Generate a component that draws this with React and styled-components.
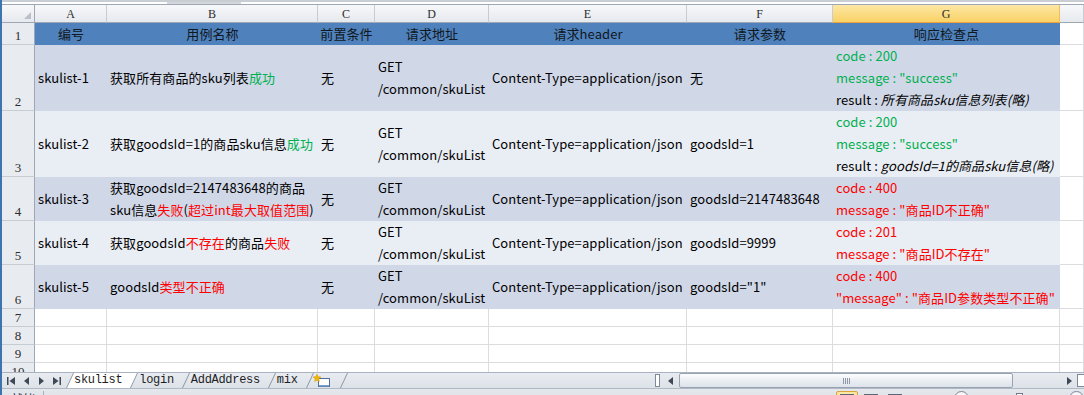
import React from 'react';
import styled, { createGlobalStyle } from 'styled-components';

const GlobalStyle = createGlobalStyle`
  * { box-sizing: border-box; }
  html, body { margin: 0; padding: 0; background: #ffffff; }
  body { font-family: "Noto Sans CJK SC", "Noto Sans", sans-serif; }
`;

const COLS = [72, 211, 57, 114, 198, 146, 227];
const LETTERS = ['A', 'B', 'C', 'D', 'E', 'F', 'G'];
const ROW_HEIGHTS = [22, 66, 66, 44, 44, 44, 18, 18, 18, 18];
const FILLS = {
    head: '#4f81bd',
    dark: '#d0d8e8',
    light: '#e9edf4',
    none: '#ffffff',
};

const Window = styled.div`
    width: 1084px;
    height: 395px;
    overflow: hidden;
    display: flex;
    flex-direction: column;
    border-left: 2px solid #3d74ad;
    background: #ffffff;
`;
const FormulaEdge = styled.div`
    height: 5px;
    flex-shrink: 0;
    display: flex;
    border-top: 2px solid #c9ced5;
    border-bottom: 1px solid #9ea7b3;
    padding-left: 165px;
`;
const ResizeGrip = styled.div`
    width: 74px;
    height: 2px;
    background: #d3d7dc;
`;
const Sheet = styled.div`
    height: 367px;
    flex-shrink: 0;
    overflow: hidden;
    display: grid;
    grid-template-columns: 33px ${COLS.map(c => `${c}px`).join(' ')} 1fr;
    grid-template-rows: 18px ${ROW_HEIGHTS.map(h => `${h}px`).join(' ')};
`;
const Corner = styled.div`
    display: flex;
    align-items: flex-end;
    justify-content: flex-end;
    padding: 0 3px 3px 0;
    background: linear-gradient(#f7f8fa, #e6e9ee);
    border-right: 1px solid #9ea7b3;
    border-bottom: 1px solid #9ea7b3;
`;
const ColHead = styled.div`
    display: flex;
    align-items: center;
    justify-content: center;
    font: 12px/16px "Liberation Serif", serif;
    color: #2d2d2d;
    background: ${({ $selected }) =>
        $selected ? 'linear-gradient(#fde7a4, #f9d266)' : 'linear-gradient(#f7f8fa, #e6e9ee)'};
    border-right: 1px solid ${({ $selected }) => ($selected ? '#efbf5a' : '#c7ccd3')};
    border-bottom: 1px solid ${({ $selected }) => ($selected ? '#f0a23c' : '#9ea7b3')};
`;
const RowHead = styled.div`
    display: flex;
    align-items: flex-end;
    justify-content: center;
    padding-bottom: 1px;
    font: 13px/15px "Liberation Serif", serif;
    color: #2d2d2d;
    background: #e8ebef;
    border-right: 1px solid #9ea7b3;
    border-bottom: 1px solid #c7ccd3;
`;
const Cell = styled.div`
    display: flex;
    flex-direction: column;
    justify-content: center;
    align-items: ${({ $center }) => ($center ? 'center' : 'flex-start')};
    padding: 0 3px;
    font-size: 13px;
    line-height: 22px;
    letter-spacing: 0.08px;
    white-space: nowrap;
    color: ${({ $fill }) => ($fill === 'head' ? '#101820' : '#000000')};
    background: ${({ $fill }) => FILLS[$fill]};
    border-right: ${({ $grid }) => ($grid ? '1px solid #dadcdd' : 'none')};
    border-bottom: ${({ $grid }) => ($grid ? '1px solid #dadcdd' : 'none')};
`;
const Ok = styled.span`
    color: #00b050;
`;
const Fail = styled.span`
    color: #ff0000;
`;
const Note = styled.i`
    font-style: italic;
`;

const TabBar = styled.div`
    height: 16px;
    flex-shrink: 0;
    display: flex;
    align-items: stretch;
    background: linear-gradient(#e8ecf1, #dde2e8);
    border-top: 1px solid #a9b2be;
`;
const Nav = styled.div`
    width: 64px;
    flex-shrink: 0;
    display: flex;
    align-items: center;
    padding-left: 5px;
    gap: 6px;
`;
const NavIcon = styled.svg`
    width: 9px;
    height: 8px;
    fill: #3e4857;
    flex-shrink: 0;
`;
const Tabs = styled.div`
    display: flex;
    align-items: stretch;
`;
const Tab = styled.div`
    position: relative;
    z-index: ${({ $active }) => ($active ? 2 : 1)};
    padding: 0 9px 0 8px;
    font: 12px/15px "Liberation Mono", monospace;
    letter-spacing: -0.3px;
    color: #1e1e1e;
    &::before {
        content: '';
        position: absolute;
        z-index: -1;
        inset: 0;
        background: ${({ $active }) => ($active ? '#ffffff' : 'transparent')};
        border-right: 1px solid #8c96a4;
        border-left: ${({ $active }) => ($active ? '1px solid #8c96a4' : 'none')};
        transform: skewX(-25deg);
        transform-origin: bottom left;
    }
`;
const NewSheet = styled(Tab)`
    display: flex;
    align-items: center;
    padding: 0 10px 0 6px;
`;
const Spacer = styled.div`
    flex: 1;
`;
const HScroll = styled.div`
    width: 429px;
    flex-shrink: 0;
    display: flex;
    align-items: center;
`;
const SplitBox = styled.div`
    width: 5px;
    height: 13px;
    margin-right: 3px;
    border: 1px solid #7f8a99;
    background: #ffffff;
`;
const ArrowButton = styled.div`
    width: ${({ $w }) => $w}px;
    height: 15px;
    display: flex;
    align-items: center;
    justify-content: center;
    flex-shrink: 0;
`;
const Thumb = styled.div`
    width: 334px;
    height: 15px;
    flex-shrink: 0;
    display: flex;
    align-items: center;
    justify-content: center;
    border: 1px solid #97a3b3;
    border-radius: 2px;
    background: linear-gradient(#fdfdfe, #e9edf2 55%, #dde3ea);
`;
const Grip = styled.div`
    width: 7px;
    height: 6px;
    background: repeating-linear-gradient(90deg, #8e98a6 0 1px, transparent 1px 2px);
`;
const Track = styled.div`
    flex: 1;
`;
const EndBox = styled.div`
    width: 7px;
    height: 13px;
    margin-left: 1px;
    border: 1px solid #7f8a99;
    border-right: none;
    background: #ffffff;
`;

const StatusBar = styled.div`
    height: 22px;
    flex-shrink: 0;
    display: flex;
    align-items: flex-start;
    padding-top: 2px;
    background: linear-gradient(#e4e8ed, #d8dde4);
    border-top: 1px solid #b1b9c4;
    font-size: 12px;
    line-height: 16px;
    color: #1e2a3a;
`;
const Ready = styled.div`
    width: 42px;
    padding-left: 9px;
    border-right: 1px solid #a6afbb;
    height: 18px;
`;
const ViewButton = styled.div`
    width: 22px;
    height: 18px;
    margin-right: 2px;
    border-radius: 2px;
    display: flex;
    justify-content: center;
    padding-top: 2px;
    background: ${({ $on }) => ($on ? 'linear-gradient(#fde9a8, #f8cf62)' : 'transparent')};
    border: 1px solid ${({ $on }) => ($on ? '#d9a43c' : 'transparent')};
`;
const ViewGlyph = styled.div`
    width: 14px;
    height: 11px;
    border: 1px solid #5b6779;
    background: #ffffff;
`;
const Zoom = styled.div`
    width: 40px;
    margin-left: 6px;
    text-align: center;
`;
const ZoomKnob = styled.div`
    width: 15px;
    height: 15px;
    border-radius: 50%;
    border: 1px solid #7c8798;
    background: #f4f6f8;
`;
const Slider = styled.div`
    width: 100px;
    display: flex;
    justify-content: center;
    padding-top: 2px;
`;
const SliderThumb = styled.div`
    width: 7px;
    height: 12px;
    border: 1px solid #6d7888;
    background: #ffffff;
`;

const rows = [
    {
        fill: 'dark',
        id: 'skulist-1',
        name: [<>获取所有商品的sku列表<Ok>成功</Ok></>],
        params: '无',
        check: [
            <Ok>code : 200</Ok>,
            <Ok>message : "success"</Ok>,
            <>result : <Note>所有商品sku信息列表(略)</Note></>,
        ],
    },
    {
        fill: 'light',
        id: 'skulist-2',
        name: [<>获取goodsId=1的商品sku信息<Ok>成功</Ok></>],
        params: 'goodsId=1',
        check: [
            <Ok>code : 200</Ok>,
            <Ok>message : "success"</Ok>,
            <>result : <Note>goodsId=1的商品sku信息(略)</Note></>,
        ],
    },
    {
        fill: 'dark',
        id: 'skulist-3',
        name: [
            <>获取goodsId=2147483648的商品</>,
            <>sku信息<Fail>失败</Fail>(<Fail>超过int最大取值范围</Fail>)</>,
        ],
        params: 'goodsId=2147483648',
        check: [<Fail>code : 400</Fail>, <Fail>message : "商品ID不正确"</Fail>],
    },
    {
        fill: 'light',
        id: 'skulist-4',
        name: [<>获取goodsId<Fail>不存在</Fail>的商品<Fail>失败</Fail></>],
        params: 'goodsId=9999',
        check: [<Fail>code : 201</Fail>, <Fail>message : "商品ID不存在"</Fail>],
    },
    {
        fill: 'dark',
        id: 'skulist-5',
        name: [<>goodsId<Fail>类型不正确</Fail></>],
        params: 'goodsId="1"',
        check: [<Fail>code : 400</Fail>, <Fail>"message" : "商品ID参数类型不正确"</Fail>],
    },
];

const HEADERS = ['编号', '用例名称', '前置条件', '请求地址', '请求header', '请求参数', '响应检查点'];

const Lines = ({ items }) => items.map((item, i) => <div key={i}>{item}</div>);

const DataRow = ({ row, index }) => {
    const { fill, id, name, params, check } = row;
    const values = [
        [id],
        name,
        ['无'],
        ['GET', '/common/skuList'],
        ['Content-Type=application/json'],
        [params],
        check,
    ];
    return (
        <>
            <RowHead>{index + 2}</RowHead>
            {values.map((v, i) => (
                <Cell key={i} $fill={fill}>
                    <Lines items={v} />
                </Cell>
            ))}
            <Cell $fill="none" $grid />
        </>
    );
};

const EmptyRow = ({ n }) => (
    <>
        <RowHead>{n}</RowHead>
        {LETTERS.map(l => (
            <Cell key={l} $fill="none" $grid />
        ))}
        <Cell $fill="none" $grid />
    </>
);

const Triangle = ({ dir }) => (
    <svg width="6" height="8" viewBox="0 0 6 8">
        <path d={dir === 'left' ? 'M5 0 L0 4 L5 8 Z' : 'M1 0 L6 4 L1 8 Z'} fill="#3e4857" />
    </svg>
);

export default function App() {
    return (
        <>
            <GlobalStyle />
            <Window>
                <FormulaEdge>
                    <ResizeGrip />
                </FormulaEdge>
                <Sheet>
                    <Corner>
                        <svg width="7" height="7" viewBox="0 0 7 7">
                            <path d="M7 0 L7 7 L0 7 Z" fill="#b9c0ca" />
                        </svg>
                    </Corner>
                    {LETTERS.map(l => (
                        <ColHead key={l} $selected={l === 'G'}>
                            {l}
                        </ColHead>
                    ))}
                    <ColHead />

                    <RowHead>1</RowHead>
                    {HEADERS.map(h => (
                        <Cell key={h} $fill="head" $center>
                            {h}
                        </Cell>
                    ))}
                    <Cell $fill="none" $grid />

                    {rows.map((row, i) => (
                        <DataRow key={row.id} row={row} index={i} />
                    ))}
                    {[7, 8, 9, 10].map(n => (
                        <EmptyRow key={n} n={n} />
                    ))}
                </Sheet>

                <TabBar>
                    <Nav>
                        <NavIcon viewBox="0 0 9 8">
                            <rect x="0" y="0" width="1.5" height="8" />
                            <path d="M8 0 L2.5 4 L8 8 Z" />
                        </NavIcon>
                        <NavIcon viewBox="0 0 9 8">
                            <path d="M7 0 L2 4 L7 8 Z" />
                        </NavIcon>
                        <NavIcon viewBox="0 0 9 8">
                            <path d="M2 0 L7 4 L2 8 Z" />
                        </NavIcon>
                        <NavIcon viewBox="0 0 9 8">
                            <path d="M1 0 L6.5 4 L1 8 Z" />
                            <rect x="7.5" y="0" width="1.5" height="8" />
                        </NavIcon>
                    </Nav>
                    <Tabs>
                        <Tab $active>skulist</Tab>
                        <Tab>login</Tab>
                        <Tab>AddAddress</Tab>
                        <Tab>mix</Tab>
                        <NewSheet>
                            <svg width="18" height="14" viewBox="0 0 18 14">
                                <rect x="5.5" y="4.5" width="11" height="8" fill="#ffffff" stroke="#4d6f9c" />
                                <rect x="6" y="11" width="10" height="1.5" fill="#7fa0c8" />
                                <path
                                    d="M4 0 L5.2 2.6 L8 3 L5.8 4.8 L6.4 7.6 L4 6.2 L1.6 7.6 L2.2 4.8 L0 3 L2.8 2.6 Z"
                                    fill="#f2b705"
                                    stroke="#d08e00"
                                    strokeWidth="0.4"
                                />
                            </svg>
                        </NewSheet>
                    </Tabs>
                    <Spacer />
                    <HScroll>
                        <SplitBox />
                        <ArrowButton $w={16}>
                            <Triangle dir="left" />
                        </ArrowButton>
                        <Thumb>
                            <Grip />
                        </Thumb>
                        <Track />
                        <ArrowButton $w={14}>
                            <Triangle dir="right" />
                        </ArrowButton>
                        <EndBox />
                    </HScroll>
                </TabBar>

                <StatusBar>
                    <Ready>就绪</Ready>
                    <Spacer />
                    <ViewButton $on>
                        <ViewGlyph />
                    </ViewButton>
                    <ViewButton>
                        <ViewGlyph />
                    </ViewButton>
                    <ViewButton>
                        <ViewGlyph />
                    </ViewButton>
                    <Zoom>100%</Zoom>
                    <ZoomKnob />
                    <Slider>
                        <SliderThumb />
                    </Slider>
                    <ZoomKnob />
                </StatusBar>
            </Window>
        </>
    );
}
